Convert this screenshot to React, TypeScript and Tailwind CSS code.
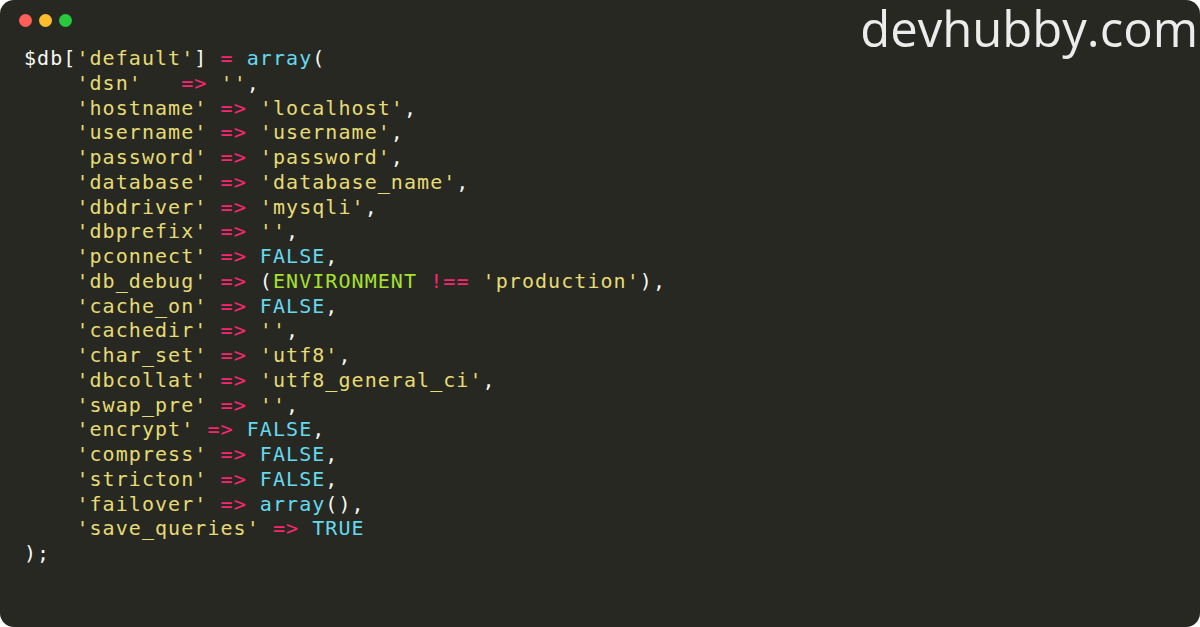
type Tok = [string, string];

const W = "text-[#f8f8f2]";
const S = "text-[#e6db74]";
const P = "text-[#f92672]";
const C = "text-[#66d9ef]";
const G = "text-[#a6e22e]";

const pair = (key: string, value: Tok[], pad = " "): Tok[] => [
  ["    ", W],
  [`'${key}'`, S],
  [pad, W],
  ["=>", P],
  [" ", W],
  ...value,
];

const str = (v: string, comma = true): Tok[] => [
  [`'${v}'`, S],
  ...(comma ? ([[",", W]] as Tok[]) : []),
];
const kw = (v: string, comma = true): Tok[] => [
  [v, C],
  ...(comma ? ([[",", W]] as Tok[]) : []),
];

const lines: Tok[][] = [
  [
    ["$db[", W],
    ["'default'", S],
    ["] ", W],
    ["=", P],
    [" ", W],
    ["array", C],
    ["(", W],
  ],
  pair("dsn", str(""), "   "),
  pair("hostname", str("localhost")),
  pair("username", str("username")),
  pair("password", str("password")),
  pair("database", str("database_name")),
  pair("dbdriver", str("mysqli")),
  pair("dbprefix", str("")),
  pair("pconnect", kw("FALSE")),
  pair("db_debug", [
    ["(", W],
    ["ENVIRONMENT", G],
    [" ", W],
    ["!==", P],
    [" ", W],
    ["'production'", S],
    ["),", W],
  ]),
  pair("cache_on", kw("FALSE")),
  pair("cachedir", str("")),
  pair("char_set", str("utf8")),
  pair("dbcollat", str("utf8_general_ci")),
  pair("swap_pre", str("")),
  pair("encrypt", kw("FALSE")),
  pair("compress", kw("FALSE")),
  pair("stricton", kw("FALSE")),
  pair("failover", [
    ["array", C],
    ["(),", W],
  ]),
  pair("save_queries", kw("TRUE", false)),
  [[");", W]],
];

export default function App() {
  return (
    <div className="h-[627px] w-[1200px] overflow-hidden bg-white">
      <div className="relative h-full w-full overflow-hidden rounded-[14px] bg-[#272822]">
        <div className="flex gap-[7px] pl-[19px] pt-[14px]">
          <span className="h-[13px] w-[13px] rounded-full bg-[#ff5f56]" />
          <span className="h-[13px] w-[13px] rounded-full bg-[#ffbd2e]" />
          <span className="h-[13px] w-[13px] rounded-full bg-[#27c93f]" />
        </div>

        <pre className="mt-[19px] pl-[24px] font-['DejaVu_Sans_Mono',monospace] text-[20px] leading-[24.75px] tracking-[1.06px]">
          {lines.map((line, i) => (
            <div key={i}>
              {line.map(([t, c], j) => (
                <span key={j} className={c}>
                  {t}
                </span>
              ))}
            </div>
          ))}
        </pre>

        <div className="absolute right-[2px] top-0 font-['Open_Sans',sans-serif] text-[49px] leading-[56px] text-[#ececec]">
          devhubby.com
        </div>
      </div>
    </div>
  );
}
